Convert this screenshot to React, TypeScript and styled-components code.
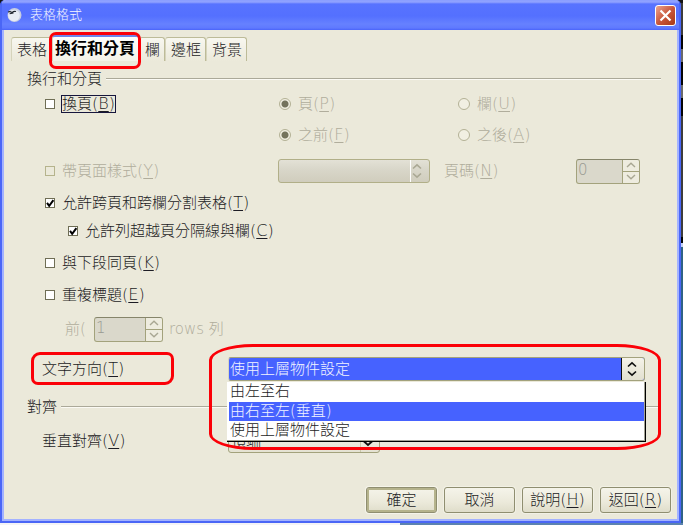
import React from "react";
import styled, { createGlobalStyle, css } from "styled-components";

const FACE = "#ebe9da";
const BLUE = "#4662ff";
const OLIVE = "#a3a27c";
const MUTED = "#b0ad9c";
const INK = "#1c1c24";

const Global = createGlobalStyle`
  * { box-sizing: border-box; }
  body { margin: 0; }
  body, button, input, select {
    font-family: "DejaVu Sans Light", "DejaVu Sans", "Noto Sans CJK TC", sans-serif;
    font-size: 15px;
    font-weight: 200;
    line-height: 20px;
    color: ${INK};
  }
`;

const Desktop = styled.div`
  display: flex;
  min-height: 100vh;
  padding: 0 2px 2px 0;
  background:
    linear-gradient(90deg, #f4f4f6 0 400px, #5b83b0 400px) bottom / 100% 2px no-repeat,
    linear-gradient(#141414 0 3px, #3c3c3c 3px 35px, #050505 35px 49px, #6a6a6a 49px 62px,
      #050505 62px 85px, #6a6a6a 85px 98px, #050505 98px 116px, #3c3c3c 116px 237px,
      #050505 237px 243px, #c4d0f4 243px 247px, #2f6286 247px);
`;

const Dialog = styled.main`
  flex: 1;
  display: flex;
  flex-direction: column;
  background: ${FACE};
  border: 2px solid #4a66f6;
  border-top: 0;
  border-radius: 5px 5px 0 0;
`;

const TitleBar = styled.header`
  display: flex;
  align-items: center;
  gap: 8px;
  height: 30px;
  padding: 0 3px 0 5px;
  border-radius: 4px 4px 0 0;
  background: linear-gradient(#8c9fff 0 1px, #93a4ff 2px, #5873ff 4px, #5470ff 16px, #6681ff 24px, #5f79ff 28px, #4a64fa 30px);
`;

const Title = styled.h1`
  flex: 1;
  margin: 0;
  font-size: 13px;
  font-weight: 200;
  line-height: 20px;
  color: #f4f6ff;
`;

const CloseButton = styled.button`
  display: grid;
  place-items: center;
  width: 21px;
  height: 21px;
  padding: 0;
  border: 1px solid #fff;
  border-radius: 3px;
  background: linear-gradient(135deg, #eba590, #c9573c 50%, #a83a16);
`;

const Client = styled.div`
  flex: 1;
  display: flex;
  flex-direction: column;
  padding: 5px 6px 6px 7px;
  border: 2px solid #a3b2ff;
  border-top: 0;
`;

const TabBar = styled.div`
  display: flex;
  align-items: flex-end;
  height: 26px;
`;

const Tab = styled.button<{ $active?: boolean }>`
  position: relative;
  height: 24px;
  padding: 0 4px 0 5px;
  border: 1px solid #bdbb98;
  border-left-color: #d6d4bc;
  border-bottom: 0;
  border-radius: 3px 3px 0 0;
  background: linear-gradient(#f8f7f0, ${FACE});
  white-space: nowrap;
  ${(p) =>
    p.$active &&
    css`
      height: 26px;
      padding: 0 3px 0 2px;
      border-top: 2px solid #6f86e8;
      background: linear-gradient(#fffffc, #f3f2e8);
      font-size: 16px;
      font-weight: 700;
      color: #000;
    `}
`;

const TabLabel = styled.span`
  display: block;
`;

const Marker = styled.span<{ $top: number; $right: number; $bottom: number; $left: number; $corner: string }>`
  position: absolute;
  z-index: 3;
  top: ${(p) => p.$top}px;
  right: ${(p) => p.$right}px;
  bottom: ${(p) => p.$bottom}px;
  left: ${(p) => p.$left}px;
  border: 3px solid #fb0007;
  border-radius: ${(p) => p.$corner};
  pointer-events: none;
`;

const Group = styled.section<{ $gap: number }>`
  margin: ${(p) => p.$gap}px 10px 0 16px;
`;

const GroupTitle = styled.h2`
  display: flex;
  align-items: center;
  gap: 4px;
  margin: 0;
  font-size: 15px;
  font-weight: 200;
  line-height: 22px;
  &::after {
    content: "";
    flex: 1;
    height: 2px;
    background: linear-gradient(#aba999 0 1px, #fbfaf4 1px);
  }
`;

const Row = styled.div<{ $gap?: number; $indent?: number; $columns?: string }>`
  display: grid;
  grid-template-columns: ${(p) => p.$columns ?? "auto"};
  justify-content: start;
  align-items: center;
  height: 28px;
  margin-top: ${(p) => p.$gap ?? 0}px;
  padding-left: ${(p) => p.$indent ?? 18}px;
`;

const Choice = styled.label<{ $muted?: boolean }>`
  position: relative;
  display: flex;
  align-items: center;
  gap: 6px;
  white-space: nowrap;
  color: ${(p) => (p.$muted ? MUTED : INK)};
`;

const Caption = styled.span<{ $focused?: boolean }>`
  padding: 0 1px;
  line-height: 18px;
  outline: ${(p) => (p.$focused ? "1px solid #16163c" : "none")};
  outline-offset: -1px;
`;

const KeyHint = styled.span`
  font-size: 16px;
  line-height: 18px;
`;

const Mnemonic = styled.u`
  text-underline-offset: 2px;
  text-decoration-thickness: 1px;
  text-decoration-skip-ink: none;
`;

const Check = styled.input`
  appearance: none;
  width: 10px;
  height: 10px;
  margin: 0;
  border: 1px solid #6f6e55;
  background: #fff;
  &:disabled {
    border-color: #b5b38c;
    background: ${FACE};
  }
`;

const Tick = styled.svg`
  position: absolute;
  left: 1px;
  width: 9px;
  height: 9px;
`;

const Radio = styled.input`
  appearance: none;
  width: 12px;
  height: 12px;
  margin: 0;
  border: 1px solid #b3b195;
  border-radius: 50%;
  background: #f1efe2;
  &:checked {
    background: radial-gradient(circle at 50% 50%, #74735c 0 3px, #f1efe2 4px);
  }
`;

const FieldLabel = styled.label<{ $muted?: boolean }>`
  position: relative;
  white-space: nowrap;
  color: ${(p) => (p.$muted ? MUTED : INK)};
`;

const SpinBox = styled.div<{ $width: number }>`
  display: flex;
  width: ${(p) => p.$width}px;
  height: 25px;
  border: 1px solid ${OLIVE};
  border-top-color: #86856a;
  border-radius: 3px;
  background: #dad8cb;
  overflow: hidden;
`;

const SpinInput = styled.input`
  flex: 1;
  min-width: 0;
  padding: 0 1px 2px;
  border: 0;
  background: transparent;
  color: #999a92;
`;

const SpinButtons = styled.div`
  display: grid;
  width: 17px;
  border-left: 1px solid ${OLIVE};
`;

const SpinButton = styled.button`
  display: grid;
  place-items: center;
  padding: 0;
  border: 0;
  background: #eeecdf;
  & + & {
    border-top: 1px solid ${OLIVE};
  }
`;

const ComboBox = styled.div<{ $width?: number }>`
  position: relative;
  width: ${(p) => (p.$width ? `${p.$width}px` : "100%")};
  height: 24px;
`;

const Select = styled.select<{ $open?: boolean }>`
  appearance: none;
  display: block;
  width: 100%;
  height: 24px;
  padding: 0 24px 0 2px;
  border: 1px solid ${OLIVE};
  border-radius: 3px;
  background: linear-gradient(#f5f3e9, #e4e2d2);
  color: ${INK};
  opacity: 1;
  &:disabled {
    border-color: #b1af88;
    background: linear-gradient(#e3e1d6, #d9d7ca 40%, #d0cdbd);
    color: ${MUTED};
  }
  ${(p) =>
    p.$open &&
    css`
      padding-left: 1px;
      border-left-color: #d8d6c0;
      background: ${BLUE};
      color: #f2f4ff;
    `}
`;

const Arrow = styled.span<{ $tone: "open" | "plain" | "muted" }>`
  position: absolute;
  top: 1px;
  right: 1px;
  display: flex;
  align-items: center;
  width: ${(p) => (p.$tone === "open" ? 23 : 19)}px;
  height: 22px;
  padding-left: ${(p) => (p.$tone === "open" ? 5 : 1)}px;
  border-left: 1px solid ${(p) => (p.$tone === "open" ? "#101010" : p.$tone === "muted" ? "#fff" : "#cbc9ac")};
  border-radius: 0 2px 2px 0;
  background: ${(p) => (p.$tone === "open" ? "linear-gradient(#f5f3e9, #e2e0d0)" : "none")};
  pointer-events: none;
`;

const Options = styled.ul`
  position: absolute;
  z-index: 2;
  top: 25px;
  left: -1px;
  right: -1px;
  margin: 0;
  padding: 0 0 0 2px;
  list-style: none;
  background: #fff;
  border: 1px solid #000;
  border-width: 0 1px 1px 0;
  box-shadow: inset -1px -1px 0 #a3a295;
`;

const Option = styled.li<{ $selected?: boolean }>`
  height: 19px;
  margin-right: 1px;
  padding-left: 1px;
  line-height: 19px;
  &:first-child { height: 20px; }
  &:last-child { margin-bottom: 1px; }
  background: ${(p) => (p.$selected ? BLUE : "transparent")};
  color: ${(p) => (p.$selected ? "#f2f4ff" : INK)};
`;

const Footer = styled.footer`
  display: flex;
  justify-content: flex-end;
  gap: 7px;
  margin-top: auto;
`;

const PushButton = styled.button<{ $primary?: boolean }>`
  width: 71px;
  height: 26px;
  padding: 0;
  border: 1px solid #8f8e70;
  border-radius: 3px;
  background: linear-gradient(#f5f4ea, #ebe9da 60%, #dfddca);
  box-shadow: ${(p) => (p.$primary ? "inset 0 0 0 2px #b5b38c, 0 0 0 1px #f6f5ea" : "0 0 0 1px #f2f1e5")};
  white-space: nowrap;
`;

const Key = ({ k }: { k: string }) => (
  <KeyHint>
    (<Mnemonic>{k}</Mnemonic>)
  </KeyHint>
);

const Chevron = ({ up, color }: { up?: boolean; color: string }) => (
  <svg width="10" height="6" viewBox="0 0 10 6" fill="none" stroke={color} strokeWidth="1.4" aria-hidden="true">
    <path d={up ? "M1 5 5 1.2 9 5" : "M1 1 5 4.8 9 1"} />
  </svg>
);

const DropChevron = ({ color }: { color: string }) => (
  <svg width="12" height="12" viewBox="0 0 12 12" fill="none" stroke={color} strokeWidth="1.8" aria-hidden="true">
    <path d="M1.5 6 6 10 10.5 6" />
  </svg>
);

const DoubleChevron = ({ color }: { color: string }) => (
  <svg width="10" height="16" viewBox="0 0 10 16" fill="none" stroke={color} strokeWidth="1.6" aria-hidden="true">
    <path d="M1 5.5 5 1.8 9 5.5M1 10.5 5 14.2 9 10.5" />
  </svg>
);

type CheckItemProps = { text: string; k: string; checked?: boolean; disabled?: boolean; focused?: boolean };

const CheckItem = ({ text, k, checked, disabled, focused }: CheckItemProps) => (
  <Choice $muted={disabled}>
    <Check type="checkbox" defaultChecked={checked} disabled={disabled} />
    {checked && (
      <Tick viewBox="0 0 9 9" fill="none" stroke="#000" strokeWidth="2" aria-hidden="true">
        <path d="M1 3.8 3.2 6.8 7.4 1.2" />
      </Tick>
    )}
    <Caption $focused={focused}>
      {text}
      <Key k={k} />
    </Caption>
  </Choice>
);

const RadioItem = ({ group, text, k, checked }: { group: string; text: string; k: string; checked?: boolean }) => (
  <Choice $muted>
    <Radio type="radio" name={group} defaultChecked={checked} disabled />
    <Caption>
      {text}
      <Key k={k} />
    </Caption>
  </Choice>
);

const Spin = ({ id, value, width }: { id: string; value: string; width: number }) => (
  <SpinBox $width={width}>
    <SpinInput id={id} defaultValue={value} disabled />
    <SpinButtons>
      <SpinButton disabled aria-label="+">
        <Chevron up color="#a9a793" />
      </SpinButton>
      <SpinButton disabled aria-label="-">
        <Chevron color="#a9a793" />
      </SpinButton>
    </SpinButtons>
  </SpinBox>
);

const DIRECTIONS = ["由左至右", "由右至左(垂直)", "使用上層物件設定"];

export default function App() {
  return (
    <>
      <Global />
      <Desktop>
        <Dialog>
          <TitleBar>
            <svg width="15" height="15" viewBox="0 0 15 15" aria-hidden="true">
              <circle cx="7.5" cy="7" r="7" fill="#c8cee2" />
              <circle cx="7" cy="7.5" r="5.8" fill="#e9ecf4" />
              <path d="M1 4Q3.2 3 5 4.6 6.8 2.8 9 3.6M2.6 5.8 6.5 5" fill="none" stroke="#20242e" strokeWidth="1.1" />
            </svg>
            <Title>表格格式</Title>
            <CloseButton aria-label="關閉">
              <svg width="13" height="13" viewBox="0 0 13 13" stroke="#fff" strokeWidth="2.2" aria-hidden="true">
                <path d="M1.5 1.5 11.5 11.5M11.5 1.5 1.5 11.5" />
              </svg>
            </CloseButton>
          </TitleBar>
          <Client>
            <TabBar role="tablist">
              <Tab role="tab">表格</Tab>
              <Tab role="tab" aria-selected="true" $active>
                <TabLabel>換行和分頁</TabLabel>
                <Marker $top={-5} $right={-3} $bottom={-8} $left={-4} $corner="7px" />
              </Tab>
              <Tab role="tab">欄</Tab>
              <Tab role="tab">邊框</Tab>
              <Tab role="tab">背景</Tab>
            </TabBar>

            <Group $gap={7}>
              <GroupTitle>換行和分頁</GroupTitle>
              <Row $columns="234px 179px auto">
                <CheckItem text="換頁" k="B" focused />
                <RadioItem group="unit" text="頁" k="P" checked />
                <RadioItem group="unit" text="欄" k="U" />
              </Row>
              <Row $gap={3} $indent={252} $columns="179px auto">
                <RadioItem group="place" text="之前" k="F" checked />
                <RadioItem group="place" text="之後" k="A" />
              </Row>
              <Row $gap={8} $columns="233px 166px 132px auto">
                <CheckItem text="帶頁面樣式" k="Y" disabled />
                <ComboBox $width={152}>
                  <Select disabled aria-label="頁面樣式" />
                  <Arrow $tone="muted">
                    <DoubleChevron color="#aaa894" />
                  </Arrow>
                </ComboBox>
                <FieldLabel $muted htmlFor="page-number">
                  頁碼
                  <Key k="N" />
                </FieldLabel>
                <Spin id="page-number" value="0" width={64} />
              </Row>
              <Row $gap={4}>
                <CheckItem text="允許跨頁和跨欄分割表格" k="T" checked />
              </Row>
              <Row $indent={41}>
                <CheckItem text="允許列超越頁分隔線與欄" k="C" checked />
              </Row>
              <Row $gap={4}>
                <CheckItem text="與下段同頁" k="K" />
              </Row>
              <Row $gap={4}>
                <CheckItem text="重複標題" k="E" />
              </Row>
              <Row $gap={6} $indent={38} $columns="29px 75px auto">
                <FieldLabel $muted htmlFor="heading-rows">
                  前(
                </FieldLabel>
                <Spin id="heading-rows" value="1" width={69} />
                <FieldLabel $muted as="span">
                  rows 列
                </FieldLabel>
              </Row>
              <Row $gap={12} $indent={15} $columns="186px minmax(0, 1fr) 16px">
                <FieldLabel htmlFor="direction">
                  文字方向
                  <Key k="T" />
                  <Marker $top={-7} $right={54} $bottom={-6} $left={-11} $corner="9px 7px" />
                </FieldLabel>
                <ComboBox>
                  <Select id="direction" $open defaultValue={DIRECTIONS[2]}>
                    {DIRECTIONS.map((d) => (
                      <option key={d}>{d}</option>
                    ))}
                  </Select>
                  <Arrow $tone="open">
                    <DoubleChevron color="#101010" />
                  </Arrow>
                  <Options role="listbox">
                    {DIRECTIONS.map((d, i) => (
                      <Option key={d} role="option" aria-selected={i === 1} $selected={i === 1}>
                        {d}
                      </Option>
                    ))}
                  </Options>
                  <Marker $top={-13} $right={-16} $bottom={-69} $left={-19} $corner="44px / 16px" />
                </ComboBox>
              </Row>
            </Group>

            <Group $gap={13}>
              <GroupTitle>對齊</GroupTitle>
              <Row $gap={9} $indent={15} $columns="186px auto">
                <FieldLabel htmlFor="vertical">
                  垂直對齊
                  <Key k="V" />
                </FieldLabel>
                <ComboBox $width={152}>
                  <Select id="vertical">
                    <option>頂端</option>
                  </Select>
                  <Arrow $tone="plain">
                    <DropChevron color="#101010" />
                  </Arrow>
                </ComboBox>
              </Row>
            </Group>

            <Footer>
              <PushButton $primary>確定</PushButton>
              <PushButton>取消</PushButton>
              <PushButton>
                說明
                <Key k="H" />
              </PushButton>
              <PushButton>
                返回
                <Key k="R" />
              </PushButton>
            </Footer>
          </Client>
        </Dialog>
      </Desktop>
    </>
  );
}
